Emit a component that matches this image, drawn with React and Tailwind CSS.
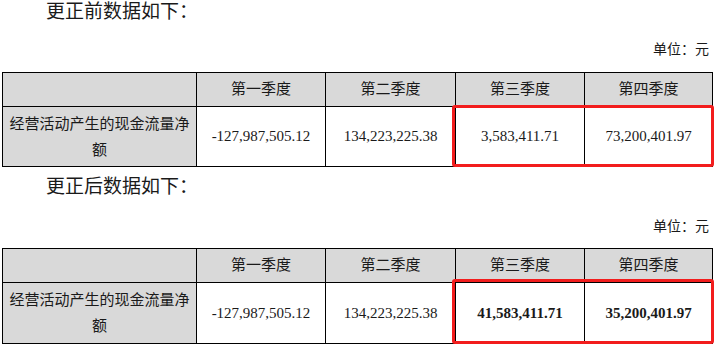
import React from "react";

const cjk = '"Liberation Serif", "Noto Sans CJK SC", serif';

function DataTable({ q3, q4, bold, boxTop }) {
  const cell = "border border-black text-center align-middle p-0";
  return (
    <div className="relative ml-[2px] w-[710px]">
      <table className="w-[710px] table-fixed border-collapse text-[15px] text-[#1a1a1a]" style={{ fontFamily: cjk }}>
        <colgroup>
          <col className="w-[194px]" />
          <col className="w-[129px]" />
          <col className="w-[130px]" />
          <col className="w-[129px]" />
          <col className="w-[128px]" />
        </colgroup>
        <tbody>
          <tr className="h-[34px] bg-[#d9d9d9]">
            <td className={cell}></td>
            <td className={cell}>第一季度</td>
            <td className={cell}>第二季度</td>
            <td className={cell}>第三季度</td>
            <td className={cell}>第四季度</td>
          </tr>
          <tr className={boxTop === 31 ? "h-[61px]" : "h-[60px]"}>
            <td className={`${cell} bg-[#d9d9d9] leading-[26px] whitespace-nowrap`}>
              <div>经营活动产生的现金流量净</div>
              <div>额</div>
            </td>
            <td className={`${cell} bg-white`}>-127,987,505.12</td>
            <td className={`${cell} bg-white`}>134,223,225.38</td>
            <td className={`${cell} bg-white ${bold ? "font-bold" : ""}`}>{q3}</td>
            <td className={`${cell} bg-white ${bold ? "font-bold" : ""}`}>{q4}</td>
          </tr>
        </tbody>
      </table>
      <div
        className={`pointer-events-none absolute left-[450px] w-[262px] rounded-[3px] border-[3px] border-[#f21d1d] ${
          boxTop === 31 ? "top-[31px] h-[65px]" : "top-[33px] h-[62px]"
        }`}
      ></div>
    </div>
  );
}

export default function App() {
  return (
    <div className="w-[715px] h-[346px] overflow-hidden bg-white text-[#1a1a1a]" style={{ fontFamily: cjk }}>
      <div className="pl-[46px] text-[19px] leading-[24px]">更正前数据如下：</div>
      <div className="mt-[16px] pr-[6px] text-right text-[14px] leading-[20px]">单位：元</div>
      <div className="mt-[12px]">
        <DataTable q3="3,583,411.71" q4="73,200,401.97" bold={false} boxTop={33} />
      </div>
      <div className="mt-[8px] pl-[46px] text-[19px] leading-[24px]">更正后数据如下：</div>
      <div className="mt-[18px] pr-[6px] text-right text-[14px] leading-[20px]">单位：元</div>
      <div className="mt-[11px]">
        <DataTable q3="41,583,411.71" q4="35,200,401.97" bold={true} boxTop={31} />
      </div>
    </div>
  );
}
